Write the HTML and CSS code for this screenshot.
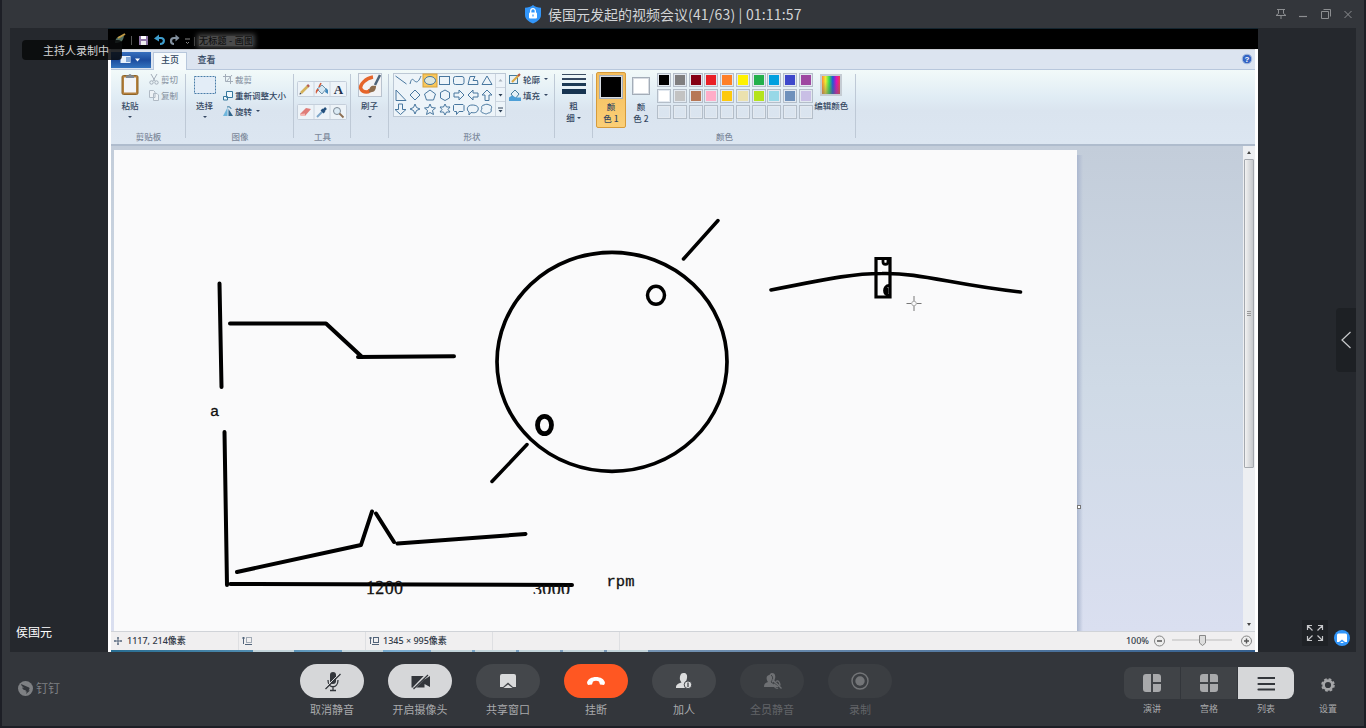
FILE: index.html
```html
<!DOCTYPE html>
<html lang="zh-CN">
<head>
<meta charset="utf-8">
<title>视频会议</title>
<link rel="stylesheet" href="styles.css">
</head>
<body>
<div class="window">
  <header class="titlebar">
    <div class="meeting-title">
      <svg width="18" height="20" viewBox="0 0 18 20"><path d="M9 1C11 2.800 14 3.600 17 3.700V11c0 4-3.500 6.500-8 8.500C4.500 17.500 1 15 1 11V3.700C4 3.600 7 2.800 9 1z" fill="#3296fa"/><rect x="5" y="8.500" width="8" height="6" rx="1" fill="#fff"/><path d="M6.700 9V7a2.300 2.300 0 0 1 4.600 0v2" fill="none" stroke="#fff" stroke-width="1.300"/><path d="M9 10.500v2" stroke="#3296fa" stroke-width="1.200"/></svg>
      <span>侯国元发起的视频会议<span class="clock">(41/63) | 01:11:57</span></span>
    </div>
    <div class="window-controls">
      <svg width="12" height="12" viewBox="0 0 12 12"><path d="M2 1.500h8M3.500 1.500v4L1 7.500h10l-2.500-2v-4M6 7.500V11"/></svg>
      <svg width="12" height="12" viewBox="0 0 12 12"><path d="M2 8.500h8" stroke-width="1.200"/></svg>
      <svg width="12" height="12" viewBox="0 0 12 12"><path d="M1.500 3.500h7v7h-7zM3.500 1.500h7v7"/></svg>
      <svg width="12" height="12" viewBox="0 0 12 12"><path d="M2.500 3l7 7M9.500 3l-7 7"/></svg>
    </div>
  </header>

  <main class="stage">
    <div class="stage-left"><span class="recording">主持人录制中</span><span class="speaker">侯国元</span></div>

    <section class="screen">
      <div class="quickbar">
        <svg width="76" height="20" viewBox="0 0 76 20">
          <path d="M1 15c0-5 4-8 9-7-1 5-3 7-9 7z" fill="#526f62"/><path d="M4 10l7-4" stroke="#c39c46" stroke-width="2"/>
          <path d="M17.500 8v9" stroke="#555"/>
          <rect x="25" y="8" width="9" height="9" fill="#8f76a6"/><rect x="27" y="8" width="5" height="3" fill="#fff"/><rect x="27" y="13" width="5" height="4" fill="#eee"/>
          <path d="M44 10h3c4 0 4 6-1 6" fill="none" stroke="#3f9dcc" stroke-width="2.200"/><path d="M40 10.500l5-4v7z" fill="#3f9dcc"/>
          <path d="M62 10h-2c-4 0-4 6 0 6" fill="none" stroke="#83909e" stroke-width="2.200"/><path d="M65.500 10l-4-3.500v7z" fill="#83909e"/>
          <path d="M71 11h5M72 14l1.500 1.500L75 14" stroke="#888" fill="none"/>
        </svg>
        <i class="divider"></i>
        <span class="app-title">无标题 - 画图</span>
      </div>

      <nav class="tabs">
        <span class="file-tab"><svg width="22" height="10" viewBox="0 0 22 10"><rect x=".5" y="1" width="10" height="7" fill="#e8f1fb"/><rect x="6" y="2" width="4" height="5" fill="#86a9d6"/><path d="M15 3.500h5l-2.500 3z" fill="#fff"/></svg></span>
        <span class="tab tab-active">主页</span>
        <span class="tab">查看</span>
        <svg class="help" width="12" height="12" viewBox="0 0 12 12"><circle cx="6" cy="6" r="4.800" fill="#3464c4" stroke="#a8bddd"/><text x="6" y="9" text-anchor="middle" font-size="8" font-weight="bold" font-family="Liberation Sans" fill="#fff">?</text></svg>
      </nav>

      <div class="ribbon">
        <div class="group g-clipboard">
          <div class="tools">
            <div class="big-tool"><svg width="20" height="24" viewBox="0 0 20 24"><rect x="2" y="2.500" width="16" height="19" rx="1.500" fill="#b5813f" stroke="#8f6429"/><rect x="4" y="4.500" width="12" height="15" fill="#f2f4f8"/><path d="M6 5V2.500h2.500a1.500 1.500 0 0 1 3 0H14V5z" fill="#7f8893"/></svg><span>粘贴</span><i class="caret"></i></div>
            <div class="small-tools muted">
              <div><svg width="10" height="11" viewBox="0 0 10 11"><path d="M2 0l4 7M8 0L4 7" stroke="#a3adb9"/><circle cx="2.500" cy="8.500" r="1.700" fill="none" stroke="#a3adb9"/><circle cx="7.500" cy="8.500" r="1.700" fill="none" stroke="#a3adb9"/></svg>剪切</div>
              <div><svg width="10" height="11" viewBox="0 0 10 11"><path d="M.5.500h4l1.500 1.500v5.500H.5zM4.500 3.500h3.500l1.500 1.500v5.500h-5z" fill="#eef2f6" stroke="#b0bac5"/></svg>复制</div>
            </div>
          </div>
          <span class="caption">剪贴板</span>
        </div>
        <div class="group g-image">
          <div class="tools">
            <div class="big-tool"><svg width="24" height="24" viewBox="0 0 24 24"><rect x="1.500" y="3.500" width="21" height="17" fill="#e3edf7" stroke="#497da8" stroke-dasharray="2 1"/></svg><span>选择</span><i class="caret"></i></div>
            <div class="small-tools">
              <div class="muted"><svg width="10" height="11" viewBox="0 0 10 11"><path d="M0 2.500h7.500V10M2.500 0v7.500H10M3 8L9 1" fill="none" stroke="#a3adb9"/></svg>裁剪</div>
              <div><svg width="10" height="11" viewBox="0 0 10 11"><path d="M3.500 1.500h6v6h-6zM.5 6.500h4v3.500h-4z" fill="#eef8fc" stroke="#35779d"/></svg>重新调整大小</div>
              <div><svg width="10" height="11" viewBox="0 0 10 11"><path d="M4.500 1.500V10H0z" fill="#6fb6dc"/><path d="M5.500 3l4.500 7H5.500z" fill="#2e648b"/><path d="M4 1c3-1 4 1 4 2" fill="none" stroke="#35779d"/></svg>旋转<i class="caret side"></i></div>
            </div>
          </div>
          <span class="caption">图像</span>
        </div>
        <div class="group g-tools">
          <div class="tool-rows">
            <svg width="50" height="16" viewBox="0 0 50 16"><rect x=".5" y=".5" width="49" height="15" rx="1" fill="#edf3f8" stroke="#c5cfdb"/><path d="M17 1v14M33 1v14" stroke="#ccd6e0"/><path d="M4 12L11 5" stroke="#d4b25c" stroke-width="2.600"/><path d="M2.500 13.500l2-.5-1.500-1.500z" fill="#333"/><path d="M10.500 5.500l1.500-1.500" stroke="#b35d56" stroke-width="2.600"/><path d="M20 8l5-4 4 4-4 5z" fill="#d5e8f3" stroke="#6e93ac"/><path d="M20 8c-2 2-1 4-1 5l3-5z" fill="#d0593a"/><path d="M22 6l2-4" stroke="#d0593a" stroke-width="1.500"/><path d="M29 7l2 2v4l-3-2z" fill="#3f88bd"/><text x="41.500" y="12.500" text-anchor="middle" font-family="Liberation Serif" font-weight="bold" font-size="13" fill="#1f3049">A</text></svg>
            <svg width="50" height="16" viewBox="0 0 50 16"><rect x=".5" y=".5" width="49" height="15" rx="1" fill="#edf3f8" stroke="#c5cfdb"/><path d="M17 1v14M33 1v14" stroke="#ccd6e0"/><path d="M3 10l6-6 5 1-6 7H4z" fill="#df7c78"/><path d="M3 10l5-.5V12H4z" fill="#f3b7b3"/><path d="M20 13l6-6" stroke="#7ca6c9" stroke-width="2"/><path d="M24.500 5.500l3 3M26 7l3-3" stroke="#234f7c" stroke-width="2.600"/><circle cx="40" cy="7" r="3.500" fill="#dcebf5" stroke="#7e8a96"/><path d="M42.500 9.500l4 4" stroke="#8c6d4f" stroke-width="1.800"/></svg>
          </div>
          <span class="caption">工具</span>
        </div>
        <div class="group g-brush">
          <div class="big-tool"><svg width="24" height="24" viewBox="0 0 24 24"><rect x=".5" y=".5" width="23" height="23" fill="#f2f3f5" stroke="#b9c3cf"/><path d="M15 4C8 5 1 12 3 16c2 4 9 4 9 0" fill="none" stroke="#e5652b" stroke-width="3.500"/><path d="M11 19c0-6 3-7 7-6 0 4-2 7-7 6z" fill="#8c6b4c"/><path d="M17 12l5-10" stroke="#4d6379" stroke-width="2.500"/></svg><span>刷子</span><i class="caret"></i></div>
        </div>
        <div class="group g-shapes">
          <div class="tools">
            <svg class="gallery" width="113" height="44" viewBox="0 0 113 44">
              <rect x=".5" y=".5" width="112" height="43" fill="#edf4f9" stroke="#bcc8d5"/><path d="M102.500 1v42M103 14.500h9M103 28.500h9" stroke="#ccd5df"/>
              <rect x="30" y="1" width="14" height="13" fill="#f8c75b" stroke="#d7a13b"/>
              <g fill="none" stroke="#48779f">
                <path d="M2.500 3l11 8M17 11c3-13 5 7 11-8"/><ellipse cx="37" cy="7.500" rx="5.500" ry="4" fill="#dce7df"/><rect x="46.500" y="3.500" width="10" height="8"/><rect x="60.500" y="3.500" width="10.500" height="8" rx="2"/><path d="M75 11.500l2-8 5 0-2 4h4.500l.5 4zM94 3l5 8.500H89z"/>
                <path d="M3 17v10.500h10zM22 17l5 5-5 5-5-5zM37 17l5.500 4-2 6h-7l-2-6zM47.500 19.500L52 17l4.500 2.500v5.500L52 27.500 47.500 25zM61 20h5v-3l5 5-5 5v-3h-5zM85 20h-5v-3l-5 5 5 5v-3h5zM92 27.500V22h-3l5-5 5 5h-3v5.500z"/>
                <path d="M5.500 31h4v5.500H13l-5.500 5L2 36.500h3.500zM22 31l1.500 3.500L27 36l-3.500 1.500L22 41l-1.500-3.500L17 36l3.500-1.500zM37 31l1.500 3.500 4 .5-3 2.500 1 4-3.500-2-3.500 2 1-4-3-2.500 4-.5zM52 31l1.500 3H57l-2 2.500L57 39h-3.500L52 42l-1.500-3H47l2-2.500-2-2.500h3.500zM61.500 31.500h8.500l1 1v5l-1 1h-4l-2.500 3v-3h-2l-1-1v-5z"/><path d="M76 39c-3-2-2-7 3-7s7 2 6 5-4 3-7 2.500L76 42zM91 32c2-1 4-1 5 0 3 0 3 3 2 4 1 3-1 4-3 4-2 2-4 0-5 0-3-1-2-3-1-4-1-2 0-4 2-4z"/>
              </g>
              <path d="M105.500 8.500h4L107.500 6z" fill="#aab3bd"/><path d="M105.500 21h4l-2 2.500zM105.500 37h4l-2 2.500z" fill="#2e4056"/><path d="M105 35h5" stroke="#2e4056"/>
            </svg>
            <div class="small-tools">
              <div><svg width="12" height="12" viewBox="0 0 12 12"><rect x=".5" y="2.500" width="8" height="8" fill="#e6f0f6" stroke="#477c9d"/><path d="M3 9l7-7" stroke="#d9a844" stroke-width="2.200"/><path d="M9 3l2-2" stroke="#b35d46" stroke-width="2.200"/></svg>轮廓<i class="caret side"></i></div>
              <div><svg width="12" height="12" viewBox="0 0 12 12"><path d="M2 5l4-4 4 4-4 5z" fill="#e6f0f6" stroke="#477c9d"/><path d="M0 8.500l3-2 4 2h5V12H0z" fill="#4d9fd7"/></svg>填充<i class="caret side"></i></div>
            </div>
          </div>
          <span class="caption">形状</span>
        </div>
        <div class="group g-size">
          <div class="big-tool"><svg width="24" height="24" viewBox="0 0 24 24"><path d="M0 1.500h24" stroke="#3c4d63"/><path d="M0 6h24" stroke="#344760" stroke-width="2"/><path d="M0 11.500h24" stroke="#1d3a55" stroke-width="3"/><path d="M0 18.500h24" stroke="#173451" stroke-width="5"/></svg><span>粗</span><span class="line2">细<i class="caret side"></i></span></div>
        </div>
        <div class="group g-colors">
          <div class="tools">
            <div class="swatch-tool chosen"><b class="swatch black"></b><span>颜</span><span>色 1</span></div>
            <div class="swatch-tool"><b class="swatch white"></b><span>颜</span><span>色 2</span></div>
            <div class="palette">
              <i class="c1"></i><i class="c2"></i><i class="c3"></i><i class="c4"></i><i class="c5"></i><i class="c6"></i><i class="c7"></i><i class="c8"></i><i class="c9"></i><i class="c10"></i>
              <i class="c11"></i><i class="c12"></i><i class="c13"></i><i class="c14"></i><i class="c15"></i><i class="c16"></i><i class="c17"></i><i class="c18"></i><i class="c19"></i><i class="c20"></i>
              <i></i><i></i><i></i><i></i><i></i><i></i><i></i><i></i><i></i><i></i>
            </div>
            <div class="big-tool"><b class="spectrum"></b><span>编辑颜色</span></div>
          </div>
          <span class="caption">颜色</span>
        </div>
      </div>

      <div class="workspace">
        <svg class="paper" width="963" height="481" viewBox="114 150 963 481">
          <defs><clipPath id="lower"><rect x="525" y="585" width="60" height="9"/></clipPath></defs>
          <g fill="none" stroke="#000" stroke-width="4" stroke-linecap="round" stroke-linejoin="round">
            <path d="M219.500 283.500L221.500 387M230 323.500H326L361 356M358 357L454 356.300M224.500 432L227 585M230.500 584L572 585M237 572L361 545 372 511.500M376 513.500L394 542M397.500 543.500L525.500 534"/>
            <ellipse cx="612" cy="361.800" rx="115" ry="109.500" stroke-width="3.700"/>
            <path d="M683.500 259L718 220.500M492 481.500L527 444.500" stroke-width="3.500"/>
            <ellipse cx="656" cy="295.300" rx="8.500" ry="9" stroke-width="3.500"/>
            <ellipse cx="544.500" cy="425" rx="7" ry="8.700" stroke-width="4.800"/>
            <path d="M771 290C837 277 855 273.500 882 273.500C920 272.500 954 285 1020.500 292" stroke-width="3.600"/>
            <path d="M876 258.500H890V297H876z" stroke-width="3.200" stroke-linejoin="miter"/>
            <path d="M883 259v3c0 3 5 3 5 0v-3M889 285.500c-6 0-6 10 0 10M887 289v4" stroke-width="2.800"/>
          </g>
          <g class="canvas-text"><text class="mono" x="210" y="415.500" font-size="15.500">a</text><text x="366" y="593.500" font-size="18" textLength="37">1200</text><text x="533" y="594.500" font-size="18" textLength="37" clip-path="url(#lower)">3000</text><text class="mono" x="606.500" y="586" font-size="15.500" textLength="28">rpm</text></g>
          <g stroke="#777" fill="none"><path d="M906.500 303.500h5M916.500 303.500h5M914 296v5M914 306v5"/><circle cx="914" cy="303.500" r="2.300" stroke="#aaa"/></g>
        </svg>
        <div class="margin"><i class="handle"></i></div>
        <div class="scrollbar"><i class="up"></i><i class="thumb"></i><i class="down"></i></div>
      </div>

      <footer class="status">
        <div class="cell pos"><svg width="10" height="10" viewBox="0 0 10 10"><path d="M5 1v8M1 5h8M4 2h2M4 8h2M2 4v2M8 4v2" stroke="#52647a"/></svg>1117, 214像素</div>
        <div class="cell sel"><svg width="11" height="10" viewBox="0 0 11 10"><path d="M1.500 1v7M0 2h3" stroke="#52647a"/><rect x="4.500" y="1.500" width="5" height="5" fill="none" stroke="#52647a" stroke-dasharray="1 1"/><path d="M3 8.500h7" stroke="#52647a"/></svg></div>
        <div class="cell dim"><svg width="11" height="10" viewBox="0 0 11 10"><path d="M1.500 1v7M0 2h3M3 8.500h7" stroke="#52647a"/><rect x="4.500" y="1.500" width="5" height="5" fill="none" stroke="#52647a"/></svg>1345 × 995像素</div>
        <div class="cell empty"></div>
        <div class="zoom"><span>100%</span>
          <svg width="100" height="14" viewBox="0 0 100 14"><g fill="#eee" stroke="#858585"><circle cx="6.500" cy="7" r="5"/><circle cx="93.500" cy="7" r="5"/></g><path d="M4 7h5M91 7h5M93.500 4.500v5" stroke="#555" stroke-width="1.400"/><path d="M19 6h60" stroke="#bbb"/><path d="M46.500 1.500h6V9l-3 2.500-3-2.500z" fill="#ddd" stroke="#888"/></svg>
        </div>
      </footer>
      <div class="taskbar"><i></i><i></i><i></i><i></i><i></i><i></i><i></i></div>
    </section>

    <aside class="stage-right">
      <span class="collapse"><svg width="12" height="20" viewBox="0 0 12 20"><path d="M10.500 2L2 10l8.500 8" fill="none" stroke="#c8cacc" stroke-width="1.200"/></svg></span>
      <div class="corner">
        <span class="expand"><svg width="18" height="18" viewBox="0 0 18 18"><path d="M1.500 6V1.500H6M1.500 1.500l5 5M12 1.500h4.500V6M16.500 1.500l-5 5M1.500 12v4.500H6M1.500 16.500l5-5M12 16.500h4.500V12M16.500 16.500l-5-5" fill="none" stroke="#c5c6c8" stroke-width="1.200"/></svg></span>
        <svg width="16" height="16" viewBox="0 0 16 16"><circle cx="8" cy="8" r="8" fill="#3296fa"/><path d="M4.500 3.500h7a1.500 1.500 0 0 1 1.500 1.500v7h-2L8 9.500 5 12H3V5a1.500 1.500 0 0 1 1.500-1.500zM6 13l2-1.500 2 1.500z" fill="#fff"/></svg>
      </div>
    </aside>
  </main>

  <footer class="controls">
    <div class="brand"><svg width="15" height="15" viewBox="0 0 15 15"><circle cx="7.500" cy="7.500" r="7.500" fill="#7e8083"/><path d="M3 3l8 3.500c1 .500.500 1.500-.5 3H12l-4 3.500.8-2.500H7.500L8 9.500C5.500 9 4.500 8 4 6.500l2 .3C4 5.500 3.300 4.500 3 3z" fill="#33363b"/></svg>钉钉</div>
    <div class="actions">
      <div class="action light"><span class="pill"><svg width="20" height="22" viewBox="0 0 20 22"><rect x="8" y="2" width="6" height="12" rx="3" fill="#33363b"/><path d="M6 10c0 9 10 9 10 0M11 16.500v3.500M8 20.500h6M18.500 4L3.500 19" fill="none" stroke="#33363b" stroke-width="1.300"/><path d="M17 4L3.500 17.500" stroke="#d6d7d9"/></svg></span>取消静音</div>
      <div class="action light"><span class="pill"><svg width="22" height="18" viewBox="0 0 22 18"><path d="M2.500 4h13v3.500L21 4v11l-5.500-3v3.500h-13z" fill="#33363b"/><path d="M17.500 3L5 16" stroke="#d6d7d9" stroke-width="2.600"/><path d="M19 3L4.500 17" stroke="#33363b" stroke-width="1.200"/></svg></span>开启摄像头</div>
      <div class="action"><span class="pill"><svg width="16" height="16" viewBox="0 0 16 16"><path d="M2 1h12a2 2 0 0 1 2 2v11h-3L8 9.500 3 14H0V3a2 2 0 0 1 2-2z" fill="#d9dadb"/><path d="M3.500 15L8 11.500l4.500 3.500z" fill="#d9dadb"/></svg></span>共享窗口</div>
      <div class="action hangup"><span class="pill"><svg width="20" height="12" viewBox="0 0 20 12"><path d="M1 8c1-8 17-8 18 0l-1 2-4-.5-1-3c-2-1-4-1-6 0l-1 3-4 .5z" fill="#fff"/></svg></span>挂断</div>
      <div class="action"><span class="pill"><svg width="16" height="18" viewBox="0 0 16 18"><path d="M7.500 1c3 0 4 2 3.500 5-.2 2-1 3-1.500 4l3 1.500V16H0c0-3 1-4 5.500-5.500C4 8.500 3.500 7 4 4.500 4.500 2 5.500 1 7.500 1z" fill="#dcddde"/><circle cx="12" cy="12.800" r="3.800" fill="#dcddde" stroke="#44474b"/><path d="M12 10.500v4.500" stroke="#44474b" stroke-width="1.300"/></svg></span>加人</div>
      <div class="action off"><span class="pill"><svg width="19" height="16" viewBox="0 0 19 16"><path d="M9 0c4 0 4 5 2 8l5 4v2H1c0-3 1-4 4-5C3 6 3 3 6 2c1 0 1-2 3-2z" fill="#6e7073"/><path d="M8 2c3 2 1 6 0 7l3 2M10 9l8 6" stroke="#3b3e42" fill="none"/><path d="M13 8.500c2-2 4 1 4 4M11 13c1 2 3 2.500 4 2M9.500 6.500l9 9" fill="none" stroke="#6e7073" stroke-width="1.300"/></svg></span>全员静音</div>
      <div class="action off"><span class="pill"><svg width="18" height="18" viewBox="0 0 18 18"><circle cx="9" cy="9" r="8" fill="none" stroke="#737578" stroke-width="1.400"/><circle cx="9" cy="9" r="4.700" fill="#737578"/></svg></span>录制</div>
    </div>
    <div class="views">
      <div class="view first"><span><svg width="18" height="18" viewBox="0 0 18 18"><path d="M3 0h5v18H3a3 3 0 0 1-3-3V3a3 3 0 0 1 3-3zM10 0h5a3 3 0 0 1 3 3v5h-8zM10 10h8v5a3 3 0 0 1-3 3h-5z" fill="#a8a9ab"/></svg></span>演讲</div>
      <div class="view"><span><svg width="18" height="18" viewBox="0 0 18 18"><path d="M3 0h5v8H0V3a3 3 0 0 1 3-3zM10 0h5a3 3 0 0 1 3 3v5h-8zM0 10h8v8H3a3 3 0 0 1-3-3zM10 10h8v5a3 3 0 0 1-3 3h-5z" fill="#a8a9ab"/></svg></span>宫格</div>
      <div class="view last"><span><svg width="18" height="18" viewBox="0 0 18 18"><path d="M1.500 4h16M1.500 10h16M1.500 15.500h16" stroke="#33363b" stroke-width="2.200" stroke-linecap="round"/></svg></span>列表</div>
      <div class="view settings"><span><svg width="14" height="14" viewBox="0 0 14 14"><circle cx="7" cy="7" r="4.400" fill="none" stroke="#a5a6a8" stroke-width="2.600"/><circle cx="7" cy="7" r="6" fill="none" stroke="#a5a6a8" stroke-width="1.600" stroke-dasharray="2.700 2.010"/></svg></span>设置</div>
    </div>
  </footer>
</div>
</body>
</html>
```
FILE: styles.css
```css
* { box-sizing: border-box; }
body { margin: 0; width: 1366px; height: 728px; overflow: hidden; background: #1c1e25; font-family: "Noto Sans CJK SC", sans-serif; }
svg { display: block; flex: none; }
i { font-style: normal; }
.window { width: 1366px; height: 728px; border: solid #1d1f26; border-width: 0 2px 2px; background: #33363b; }

.titlebar { height: 28px; display: grid; grid-template-columns: 1fr auto; align-items: center; padding: 0 10px 0 522px; }
.meeting-title { display: flex; align-items: center; gap: 6px; height: 28px; color: #d2d4d6; font-size: 14px; line-height: 28px; white-space: nowrap; }
.clock { letter-spacing: 0.180px; }
.window-controls { display: flex; gap: 10.500px; }
.window-controls svg { fill: none; stroke: #8c8e91; }

.stage { position: relative; height: 624px; margin: 0 8px; display: grid; grid-template-columns: 98px 1150px 98px; background: #25282d; }
.stage-left { display: flex; align-items: flex-end; padding: 0 0 11px 6px; color: #fff; font-size: 12px; line-height: 18px; }
.recording { position: absolute; z-index: 2; left: 12px; top: 12px; width: 100px; height: 20px; padding-left: 21px; border-radius: 4px; background: rgba(8, 9, 11, .85); color: #d3d4d5; font-size: 11px; line-height: 20px; }

.screen { background: #fff; display: flex; flex-direction: column; font-size: 8.500px; font-weight: 500; line-height: 12px; color: #344762; }
.quickbar { height: 21px; background: #000; border-top: 1px solid #14252f; display: flex; align-items: flex-start; padding-left: 6px; }
.quickbar svg { margin-top: -1px; }
.divider { width: 1px; height: 9px; margin: 8px 0 0 4px; background: #444; }
.app-title { margin: 7px 0 0 4px; height: 10px; line-height: 10px; font-size: 9px; letter-spacing: .250px; color: #111; background: #4a4a4a; box-shadow: 0 0 5px 2px #444; white-space: nowrap; }
.tabs { height: 21px; margin: 0 3px; padding-top: 2px; background: #dce4f0; border-top: 1px solid #c9ccd2; border-bottom: 1px solid #b8c7dc; display: flex; font-size: 9px; }
.file-tab { width: 40px; height: 16px; display: flex; align-items: center; justify-content: center; background: linear-gradient(#376fbd, #1c4c9e 50%, #3474bf); }
.tab { width: 39px; height: 18px; text-align: center; line-height: 15px; }
.tab-active { width: 34px; margin: 0 0 0 2px; height: 19px; background: #f6fafc; border: 1px solid #b8c7dc; border-bottom: 0; line-height: 13px; }
.help { margin: 0 2px 0 auto; position: relative; top: 1px; }

.ribbon { height: 76px; margin: 0 3px; display: flex; background: linear-gradient(#f2faf9, #e1edf5 35%, #dae4ef 55%, #dce6f1); border-bottom: 2px solid #afbccd; }
.group { position: relative; height: 74px; display: flex; flex-direction: column; justify-content: space-between; padding-top: 2px; }
.group::after { content: ""; position: absolute; right: 0; top: 4px; width: 1px; height: 64px; background: #bec9d6; }
.caption { height: 12px; text-align: center; color: #7c899b; }
.group .caption { margin-bottom: 2px; }
.tools { display: flex; align-items: flex-start; }
.g-clipboard { width: 75px; } .g-image { width: 108px; } .g-tools { width: 57px; } .g-brush { width: 38px; } .g-shapes { width: 166px; } .g-size { width: 38px; } .g-colors { width: 263px; }
.big-tool { display: flex; flex-direction: column; align-items: center; width: 37px; padding-top: 1px; white-space: nowrap; }
.g-clipboard .big-tool { width: 38px; }
.big-tool span { margin-top: 2px; height: 12px; }
.big-tool .line2 { margin-top: 0; }
.caret { display: block; width: 0; height: 0; margin-top: 5px; border: solid transparent; border-width: 2.500px 2px 0; border-top-color: #344762; }
.caret.side { display: inline-block; margin: 0 0 0 2px; }
.line2 .caret.side { margin-bottom: 2px; }
.small-tools { display: flex; flex-direction: column; padding-top: 1px; gap: 4px; white-space: nowrap; }
.small-tools div { display: flex; align-items: center; gap: 2px; height: 12px; }
.muted { color: #8f9aa8; }
.tool-rows { display: flex; flex-direction: column; gap: 7px; padding: 9px 0 0 3px; }
.g-shapes .tools { padding-left: 4px; gap: 3px; }
.gallery { margin-top: 1px; }
.g-colors .tools { padding-left: 3px; }
.swatch-tool { width: 30px; height: 56px; padding-top: 2px; display: flex; flex-direction: column; align-items: center; border: 1px solid transparent; border-radius: 2px; }
.chosen { background: linear-gradient(#f4bd5c, #fbcf77); border-color: #d69b3b; }
.swatch { width: 24px; height: 24px; margin-bottom: 1px; border: 1px solid #a4adb8; box-shadow: inset 0 0 0 1px #d8dde3; }
.black { background: #000; } .white { width: 18px; height: 18px; margin: 2px 0 5px; background: #fff; }
.palette { display: grid; grid-template-columns: repeat(10, 14px); grid-auto-rows: 14px; gap: 1.750px; padding-top: 1px; margin-left: 1px; }
.palette i { border: 1px solid #b4bec9; box-shadow: inset 0 0 0 1px #e3e9f0; }
.c1 { background: #000; } .c2 { background: #7f7f7f; } .c3 { background: #850014; } .c4 { background: #e92025; } .c5 { background: #ff8027; } .c6 { background: #fff200; } .c7 { background: #22b04b; } .c8 { background: #00a0df; } .c9 { background: #3d48cb; } .c10 { background: #9e48a1; }
.c11 { background: #fff; } .c12 { background: #c3c3c3; } .c13 { background: #b77756; } .c14 { background: #ffadc8; } .c15 { background: #fdc90d; } .c16 { background: #ebe1af; } .c17 { background: #b4e31c; } .c18 { background: #97d8e7; } .c19 { background: #6f91bb; } .c20 { background: #c9bfe5; }
.spectrum { width: 22px; height: 22px; margin: 1px 0; border: 2px solid #c5ccd3; background: linear-gradient(transparent 30%, #6667), linear-gradient(90deg, #f83, #ee3, #3d5, #25d, #d1b, #e44); }

.workspace { height: 485px; margin: 0 3px; display: grid; grid-template-columns: 963px 1fr 12px; padding-left: 3px; background: linear-gradient(#c3cdda, #cfdae6 50%, #dadff0); overflow: hidden; }
.paper { margin-top: 4px; background: #fafafb; }
.canvas-text { font-family: "Liberation Serif", serif; fill: #111; stroke: #111; stroke-width: .300px; }
.mono { font-family: "Liberation Mono", monospace; }
.margin { margin-top: 9px; background: linear-gradient(90deg, #abb7cf, transparent 6px); padding-top: 350px; }
.handle { display: block; width: 4px; height: 4px; border: 1px solid #777; background: #fff; }
.scrollbar { background: #edeff2; display: flex; flex-direction: column; align-items: center; justify-content: space-between; padding: 5px 0; }
.up { border: solid transparent; border-width: 0 2px 3px; border-bottom-color: #444; }
.down { border: solid transparent; border-width: 3px 2px 0; border-top-color: #444; }
.thumb { width: 10px; height: 309px; margin: 5px 0 auto; border: 1px solid #a5a9af; border-radius: 1px; background: repeating-linear-gradient(#999 0 1px, transparent 1px 2px) center / 4px 5px no-repeat, linear-gradient(90deg, #f2f2f2, #c5c8cc); }

.status { height: 19px; margin: 0 3px; display: flex; align-items: center; background: #f0eff0; border-top: 1px solid #d0d3d8; font-family: "Noto Sans", "Noto Sans CJK SC", sans-serif; font-size: 9px; color: #303947; white-space: nowrap; }
.cell { height: 18px; display: flex; align-items: center; gap: 4px; border-right: 1px solid #dedfe2; padding-left: 2px; }
.pos { width: 128px; } .sel { width: 127px; padding-left: 3px; } .dim { width: 127px; padding-left: 3px; gap: 3px; } .empty { width: 127px; }
.zoom { display: flex; align-items: center; gap: 4px; margin-left: auto; padding-right: 2px; }
.taskbar { height: 2px; margin: 0 3px; padding-left: 142px; display: flex; gap: 3px; background: linear-gradient(90deg, #286d91, #79acd0 25%, #7795b4 45%, #35608f); }
.taskbar i { width: 41px; height: 2px; background: #c3d4da; }
.taskbar i:nth-child(-n+2) { margin-right: 45px; }

.stage-right { display: flex; flex-direction: column; justify-content: space-between; align-items: flex-end; padding-top: 280px; }
.collapse { width: 20px; height: 64px; display: flex; align-items: center; justify-content: center; background: #1d2024; border-radius: 4px 0 0 4px; }
.corner { display: flex; align-items: center; gap: 6px; padding: 0 6px 6px 0; }
.corner > svg { margin-top: 10px; }
.expand { width: 26px; height: 26px; display: flex; align-items: center; justify-content: center; background: #1f2226; }

.controls { height: 74px; display: grid; grid-template-columns: 298px 1fr 242px; font-size: 11px; line-height: 16px; color: #a9aaac; }
.brand { display: flex; align-items: center; align-self: start; height: 24px; gap: 3px; margin: 24px 0 0 16px; font-size: 12px; color: #7e8083; }
.actions { display: flex; gap: 24px; padding-top: 12px; }
.action { width: 64px; display: flex; flex-direction: column; align-items: center; gap: 3px; }
.pill { width: 64px; height: 34px; border-radius: 17px; background: #44474b; display: flex; align-items: center; justify-content: center; }
.light .pill { background: #d6d7d9; }
.hangup .pill { background: #ff5722; }
.off { color: #626468; }
.off .pill { background: #3b3e42; }
.views { display: flex; gap: 1px; padding: 15px 0 0 2px; font-size: 9px; }
.view { width: 56px; display: flex; flex-direction: column; align-items: center; gap: 2px; }
.view span { width: 56px; height: 32px; display: flex; align-items: center; justify-content: center; background: #404347; }
.first span { border-radius: 8px 0 0 8px; }
.last span { border-radius: 0 8px 8px 0; background: #d6d7d9; }
.settings { margin-left: 5px; }
.settings span { background: none; padding-top: 3px; }
```
